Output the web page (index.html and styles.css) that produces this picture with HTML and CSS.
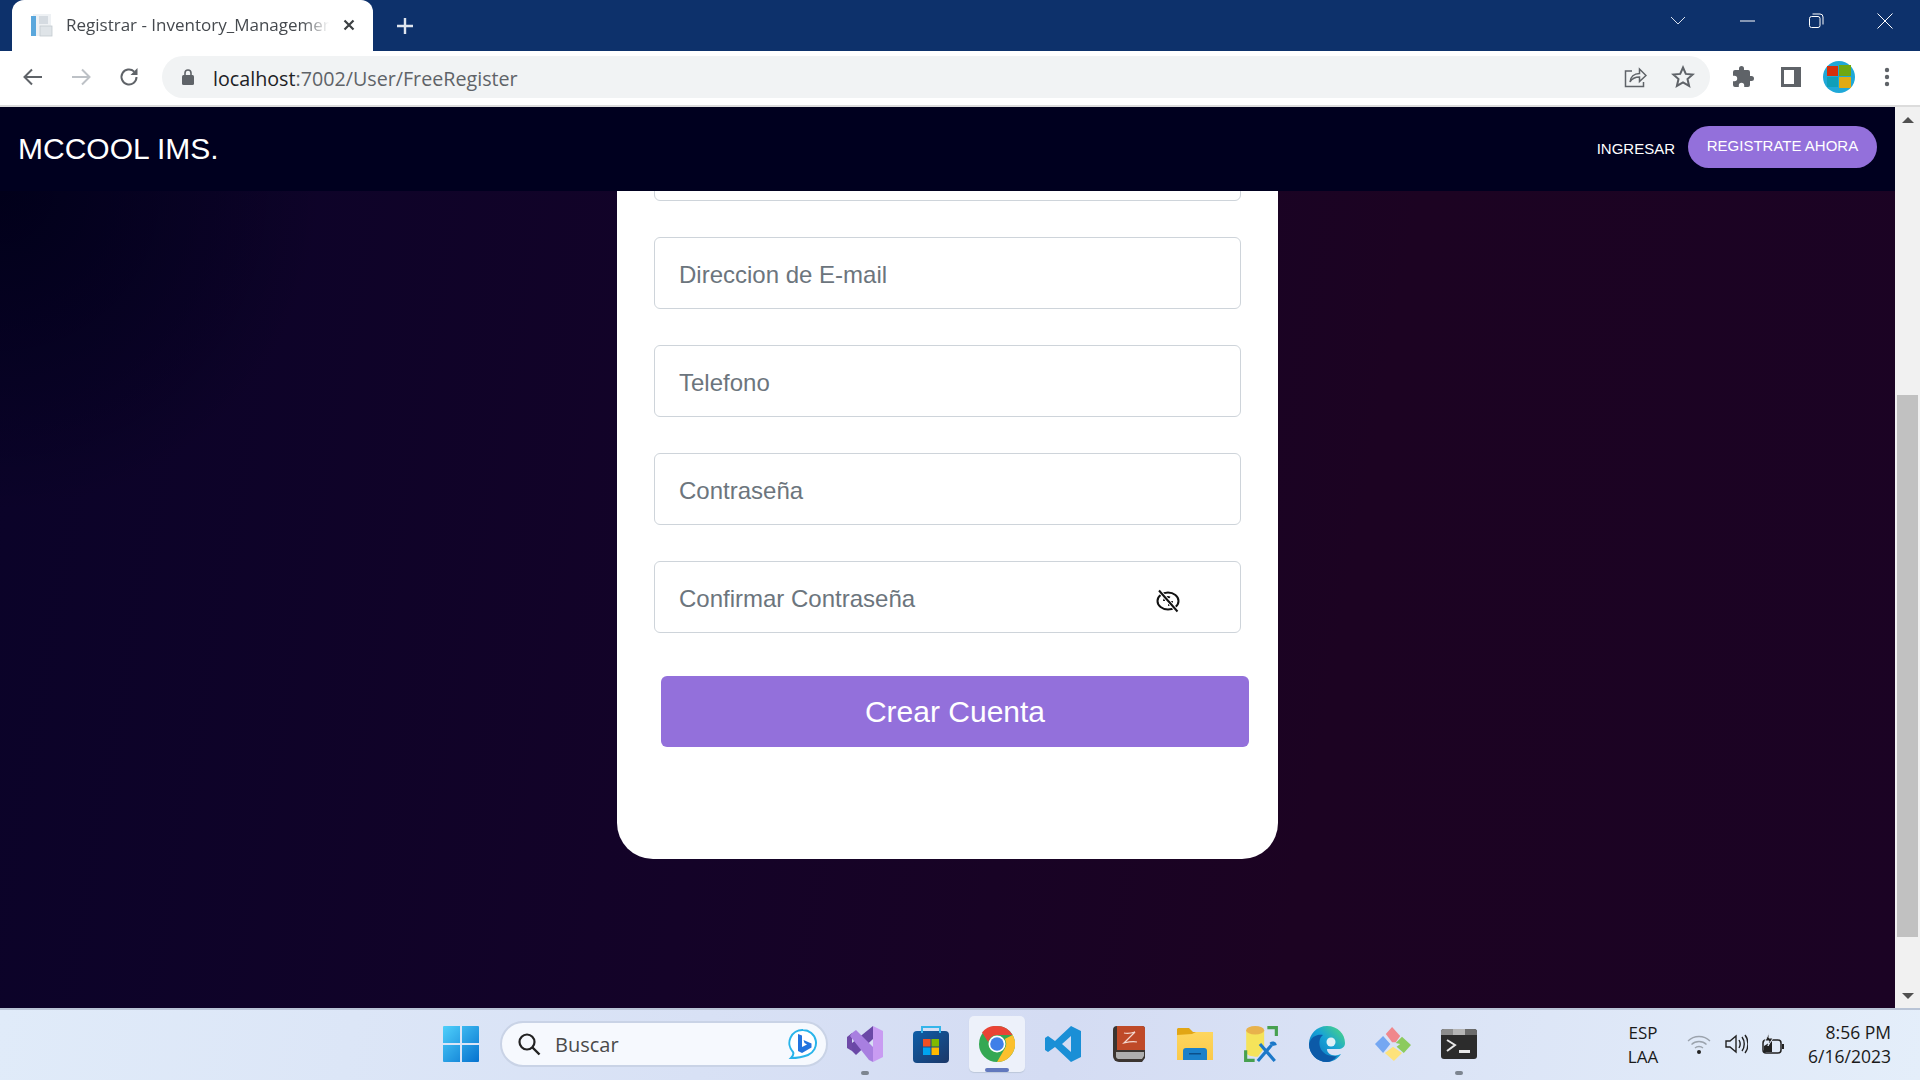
FILE: index.html
```html
<!DOCTYPE html>
<html lang="en">
<head>
    <meta charset="UTF-8">
    <title>Registrar - Inventory_Management</title>
    <link rel="stylesheet" href="styles.css">
</head>
<body>
    <div class="tabstrip">
        <div class="tab">
            <svg class="favicon" viewBox="0 0 24 24"><rect x="3" y="1" width="18" height="22" fill="#eef1f4"/><rect x="1" y="3" width="5" height="20" fill="#5aa7dc"/><rect x="9" y="3" width="9" height="8" fill="#d5dbe1"/><rect x="10" y="13" width="12" height="10" fill="#dfe4e8" stroke="#c3cad0" stroke-width=".8"/></svg>
            <span class="tab-title">Registrar - Inventory_Management</span>
            <svg class="tab-close" viewBox="0 0 16 16"><path d="M3.500 3.500l9 9M12.500 3.500l-9 9" stroke="#3c4043" stroke-width="2.200" fill="none"/></svg>
        </div>
        <svg class="new-tab" viewBox="0 0 20 20"><path d="M10 2v16M2 10h16" stroke="#dfe5ee" stroke-width="2.400" fill="none"/></svg>
        <div class="win-controls">
            <svg class="win-btn chevron" viewBox="0 0 16 10"><path d="M1 1l7 7 7-7" stroke="#d8e0ec" stroke-width="1" fill="none"/></svg>
            <svg class="win-btn" viewBox="0 0 16 16"><path d="M1 8h15" stroke="#fff" stroke-width="1" fill="none"/></svg>
            <svg class="win-btn" viewBox="0 0 16 16"><rect x="1.500" y="3.500" width="10.500" height="11" rx="2" stroke="#fff" fill="none"/><path d="M4.500 1h7.500a3 3 0 0 1 3 3v7.500" stroke="#fff" fill="none"/></svg>
            <svg class="win-btn" viewBox="0 0 16 16"><path d="M.5 .5l15 15M15.500 .5l-15 15" stroke="#fff" fill="none"/></svg>
        </div>
    </div>

    <div class="toolbar">
        <svg class="tool-icon back" viewBox="0 0 24 24"><path d="M21 12H4M11 4.500L3.500 12l7.500 7.500" stroke="#5f6368" stroke-width="2" fill="none"/></svg>
        <svg class="tool-icon" viewBox="0 0 24 24"><path d="M3 12h17M13 4.500l7.500 7.500-7.500 7.500" stroke="#bdc1c6" stroke-width="2" fill="none"/></svg>
        <svg class="tool-icon" viewBox="0 0 24 24"><path d="M19.500 12a7.500 7.500 0 1 1-2.300-5.400" stroke="#5f6368" stroke-width="2" fill="none"/><path d="M20.500 3v7h-7z" fill="#5f6368"/></svg>
        <div class="omnibox">
            <svg class="lock" viewBox="0 0 12 16"><rect x="0" y="6" width="12" height="10" rx="1.500" fill="#5f6368"/><path d="M3 7V4a3 3 0 0 1 6 0v3" stroke="#5f6368" stroke-width="1.600" fill="none"/></svg>
            <span class="url"><b>localhost</b>:7002/User/FreeRegister</span>
            <svg class="omni-icon share" viewBox="0 0 24 24"><path d="M9 6H2.500v15.500h18V17" stroke="#5f6368" stroke-width="1.500" fill="none"/><path d="M7 17c.5-5 4-8.500 9.500-8.500V4l6.500 6.500-6.500 6v-4.500c-4 0-7.500 1.500-9.500 5z" stroke="#5f6368" stroke-width="1.500" fill="none"/></svg>
            <svg class="omni-icon" viewBox="0 0 24 24"><path d="M12 2.500l2.800 6.400 6.900.6-5.200 4.600 1.600 6.800-6.100-3.600-6.100 3.600 1.600-6.800-5.200-4.600 6.900-.6z" stroke="#5f6368" stroke-width="2" fill="none"/></svg>
        </div>
        <svg class="tool-icon puzzle" viewBox="0 0 24 24"><path d="M20.500 11H19V7a2 2 0 0 0-2-2h-4V3.500a2.500 2.500 0 0 0-5 0V5H4a2 2 0 0 0-2 2v3.800h1.500a2.700 2.700 0 0 1 0 5.400H2V20a2 2 0 0 0 2 2h3.800v-1.500a2.700 2.700 0 0 1 5.400 0V22H17a2 2 0 0 0 2-2v-4h1.500a2.500 2.500 0 0 0 0-5z" fill="#5f6368"/></svg>
        <svg class="tool-icon" viewBox="0 0 24 24"><path d="M2 2h20v20H2z M5 5v14h10V5z" fill="#5f6368" fill-rule="evenodd"/></svg>
        <svg class="avatar" viewBox="0 0 32 32"><circle cx="16" cy="16" r="16" fill="#1fa8d8"/><rect x="4" y="5" width="11" height="10" fill="#d52f0c"/><rect x="16" y="4" width="12" height="11" fill="#6fa812"/><rect x="4" y="16" width="11" height="10" fill="#0f9fb8"/><rect x="16" y="16" width="12" height="11" fill="#e0aa14"/></svg>
        <svg class="tool-icon dots" viewBox="0 0 24 24"><circle cx="12" cy="5" r="2.200" fill="#5f6368"/><circle cx="12" cy="12" r="2.200" fill="#5f6368"/><circle cx="12" cy="19" r="2.200" fill="#5f6368"/></svg>
    </div>

    <div class="viewport">
        <div class="page">
            <nav class="navbar">
                <a class="brand">MCCOOL IMS.</a>
                <a class="nav-link">INGRESAR</a>
                <a class="nav-cta">REGISTRATE AHORA</a>
            </nav>
            <main class="content">
                <form class="card">
                    <input class="field" type="text" placeholder="Apellido">
                    <input class="field" type="text" placeholder="Direccion de E-mail">
                    <input class="field" type="text" placeholder="Telefono">
                    <input class="field" type="password" placeholder="Contraseña">
                    <div class="field-wrap">
                        <input class="field" type="password" placeholder="Confirmar Contraseña">
                        <svg class="eye" viewBox="0 0 24 24"><ellipse cx="12" cy="12" rx="10.500" ry="8.500" stroke="#111" stroke-width="2" fill="none"/><path d="M8 12a4 4 0 0 1 6-3.500M16 12a4 4 0 0 1-4 4" stroke="#111" stroke-width="2" fill="none"/><path d="M3 1.500l18.500 21" stroke="#fff" stroke-width="4" fill="none"/><path d="M3 1.500l18.500 21" stroke="#111" stroke-width="2" fill="none"/></svg>
                    </div>
                    <button class="submit" type="button">Crear Cuenta</button>
                </form>
            </main>
        </div>
        <div class="scrollbar">
            <span class="arrow-up"></span>
            <span class="thumb"></span>
            <span class="arrow-down"></span>
        </div>
    </div>

    <div class="taskbar">
        <div class="slot">
            <svg class="task-icon" viewBox="0 0 36 36"><defs><linearGradient id="winblue" x1="0" y1="0" x2="1" y2="1"><stop offset="0" stop-color="#4fd0fb"/><stop offset="1" stop-color="#0572cf"/></linearGradient></defs><path d="M0 1a1 1 0 0 1 1-1h16v17H0zM19 0h16a1 1 0 0 1 1 1v16H19zM0 19h17v17H1a1 1 0 0 1-1-1zM19 19h17v16a1 1 0 0 1-1 1H19z" fill="url(#winblue)"/></svg>
        </div>
        <div class="search">
            <svg class="search-icon" viewBox="0 0 24 24"><circle cx="10" cy="10" r="7.500" stroke="#222" stroke-width="2.200" fill="none"/><path d="M15.500 15.500l7 7" stroke="#222" stroke-width="2.400" fill="none"/></svg>
            <span class="search-text">Buscar</span>
            <svg class="bing" viewBox="0 0 30 32"><path d="M15 2a13 13 0 0 1 5 25c-5 2-10 3-17 3 2-2 3-4 2-6A13 13 0 0 1 15 2z" fill="#fff" stroke="#28b4ea" stroke-width="2"/><path d="M10 6l4 1.500V19l5-2.500-2.500-1.500-1-3 8 3.500v4L14 25l-4-2z" fill="#2273df"/></svg>
        </div>
        <div class="slot slot-first running">
            <svg class="task-icon" viewBox="0 0 36 36"><path d="M0 11l5-4v18l-5-3z" fill="#6f4aa8"/><path d="M26 0v13L9 29l-4-4v-8z" fill="#6a48a6"/><path d="M5 7l4-3 17 17v15l-4-2L3 10z" fill="#a87fe0"/><path d="M26 0l10 5v26l-10 5z" fill="#c99cf2"/></svg>
        </div>
        <div class="slot">
            <svg class="task-icon store" viewBox="0 0 36 38"><defs><linearGradient id="storebg" x1="0" y1="0" x2="1" y2="1"><stop offset="0" stop-color="#0f5ea8"/><stop offset="1" stop-color="#1b3768"/></linearGradient></defs><rect x="0" y="6" width="36" height="32" rx="4" fill="url(#storebg)"/><path d="M9 8V2h18v6" stroke="#35b5ea" stroke-width="2" fill="none"/><rect x="10" y="14" width="7.500" height="7.500" fill="#f25022"/><rect x="18.500" y="14" width="7.500" height="7.500" fill="#7fba00"/><rect x="10" y="22.500" width="7.500" height="7.500" fill="#00a4ef"/><rect x="18.500" y="22.500" width="7.500" height="7.500" fill="#ffb900"/></svg>
        </div>
        <div class="slot active">
            <svg class="task-icon" viewBox="0 0 36 36"><circle cx="18" cy="18" r="18" fill="#34a853"/><path d="M18 0a18 18 0 0 1 15.600 9H18a9 9 0 0 0-8.800 7L3 6.400A18 18 0 0 1 18 0z" fill="#ea4335"/><path d="M33.600 9A18 18 0 0 1 18 36l7.800-13.500A9 9 0 0 0 25.800 13z" fill="#fbc02d"/><circle cx="18" cy="18" r="8.500" fill="#fff"/><circle cx="18" cy="18" r="6.800" fill="#3f7fe8"/></svg>
        </div>
        <div class="slot">
            <svg class="task-icon" viewBox="0 0 36 36"><path d="M26 0l10 5v26l-10 5-16-15-7 5-3-2V12l3-2 7 5zM26 10l-9 8 9 8z" fill="#1a8fd6" fill-rule="evenodd"/></svg>
        </div>
        <div class="slot">
            <svg class="task-icon" viewBox="0 0 32 36"><path d="M4 0h25a3 3 0 0 1 3 3v29l-3 4H6a6 6 0 0 1-6-6V4a4 4 0 0 1 4-4z" fill="#3b3531"/><path d="M4 0h25a3 3 0 0 1 3 3v21H4z" fill="#bf4a28"/><path d="M3 26h28v4l-2 3H5a3 3 0 0 1-2-2z" fill="#aeaeae"/><path d="M11 7c4 1 8 0 11-1L11 17c4-1 9-2 13-1" stroke="#f3d8cf" stroke-width="1.200" fill="none"/></svg>
        </div>
        <div class="slot">
            <svg class="task-icon" viewBox="0 0 36 32"><defs><linearGradient id="folderbg" x1="0" y1="0" x2="0" y2="1"><stop offset="0" stop-color="#fdd65e"/><stop offset="1" stop-color="#fbc94a"/></linearGradient></defs><path d="M1 0h11l4 4h20v28H0V1z" fill="#e2a615"/><path d="M0 7l15-1 4-2h17v28H0z" fill="url(#folderbg)"/><path d="M6 32v-9a3 3 0 0 1 3-3h18a3 3 0 0 1 3 3v9z" fill="#1a80ca"/><rect x="12" y="25" width="12" height="1.500" fill="#0b4f8a"/></svg>
        </div>
        <div class="slot">
            <svg class="task-icon" viewBox="0 0 32 34"><path d="M2 4h17v17l-6 8C6 29 2 27 2 25z" fill="#f5e35a"/><ellipse cx="10.500" cy="4" rx="8.500" ry="4" fill="#e8b24c"/><path d="M22 1.500h8.500v8M1.500 23v9.500h8.500" stroke="#47a04f" stroke-width="3" fill="none"/><path d="M13 33l13-15M29 33L15 17" stroke="#1c78c8" stroke-width="3" fill="none"/><path d="M24 16a4 4 0 0 1 7 2l-4 1z" fill="#1c78c8"/></svg>
        </div>
        <div class="slot">
            <svg class="task-icon" viewBox="0 0 36 36"><defs><linearGradient id="edgebg" x1="0" y1="1" x2="1" y2="0"><stop offset="0" stop-color="#0a63b6"/><stop offset=".55" stop-color="#17a3d6"/><stop offset="1" stop-color="#52dc78"/></linearGradient></defs><path d="M18 0C29 0 36 8 36 17c0 4-3 6-7 6H18c0 6 8 8 14 5-3 5-9 8-14 8C8 36 0 28 0 18S8 0 18 0z" fill="url(#edgebg)"/><path d="M0 18C2 10 9 8 14 9c-4 3-4 8-3 12 2 7 10 10 17 9-3 4-7 6-10 6C8 36 0 28 0 18z" fill="#0c5aa8"/><circle cx="22" cy="16" r="4.500" fill="#dff0f7"/></svg>
        </div>
        <div class="slot">
            <svg class="task-icon" viewBox="0 0 40 38"><path d="M19 17l-7-9 7-8 9 10-5 7z" fill="#f0878c"/><path d="M17 19L9 10 0 19l9 10z" fill="#74a7f2"/><path d="M23 18l7-7 10 9-8 9-8-7 4-3-5-1z" fill="#8ccb5e"/><path d="M20 22l-9 7 10 9 9-9z" fill="#fde27a"/></svg>
        </div>
        <div class="slot running">
            <svg class="task-icon term" viewBox="0 0 36 30"><rect width="36" height="30" rx="3" fill="#2c2c2c"/><path d="M0 6V3a3 3 0 0 1 3-3h9v6z" fill="#8d8d8d"/><rect x="12" width="12" height="6" fill="#b5b5b5"/><path d="M24 0h9a3 3 0 0 1 3 3v3H24z" fill="#6b6b6b"/><path d="M6 11l8 5-8 6" stroke="#e8e8e8" stroke-width="2" fill="none"/><rect x="18" y="21" width="11" height="3" fill="#e8e8e8"/></svg>
        </div>
        <div class="tray">
            <div class="lang"><span>ESP</span><span>LAA</span></div>
            <svg class="tray-icon" viewBox="0 0 24 24"><path d="M1 9c6-6 16-6 22 0M4.500 12.500c4-4 11-4 15 0M8 16c2-2 6-2 8 0" stroke="#9ba3ad" stroke-width="1.300" fill="none"/><circle cx="12" cy="20" r="2" fill="#222"/></svg>
            <svg class="tray-icon" viewBox="0 0 24 24"><path d="M2 9h4l6-5v16l-6-5H2z" stroke="#222" stroke-width="1.400" fill="none"/><path d="M15 8c1.500 2.500 1.500 5.500 0 8M18 5c3 4 3 10 0 14M21 3c4 5 4 13 0 18" stroke="#222" stroke-width="1.400" fill="none"/></svg>
            <svg class="tray-icon" viewBox="0 0 24 24"><rect x="2" y="8" width="18" height="13" rx="3" stroke="#222" stroke-width="1.500" fill="none"/><rect x="21" y="12" width="2" height="5" fill="#222"/><path d="M3 20V14l8-5v11z" fill="#222"/><path d="M8 1L4 9h4l-1 5 5-8H8z" fill="#222" stroke="#e3ebf7"/></svg>
            <div class="clock"><span>8:56 PM</span><span>6/16/2023</span></div>
        </div>
    </div>
</body>
</html>
```

FILE: styles.css
```css
* {
    box-sizing: border-box;
}
html, body {
    margin: 0;
    height: 100%;
    overflow: hidden;
}
body {
    display: flex;
    flex-direction: column;
    font-family: "Liberation Sans", Arial, sans-serif;
}

/* browser chrome */
.tabstrip {
    height: 51px;
    flex: none;
    display: flex;
    align-items: flex-end;
    padding-left: 12px;
    background: #0d316b;
}
.tab {
    width: 361px;
    height: 51px;
    display: flex;
    align-items: center;
    padding: 0 16px 2px 18px;
    background: #fff;
    border-radius: 12px 12px 0 0;
}
.favicon {
    width: 24px;
    height: 24px;
    flex: none;
}
.tab-title {
    flex: 1;
    margin-left: 12px;
    font: 17px "Open Sans", sans-serif;
    color: #45494e;
    white-space: nowrap;
    overflow: hidden;
    -webkit-mask-image: linear-gradient(to right, #000 90%, transparent);
    mask-image: linear-gradient(to right, #000 90%, transparent);
}
.tab-close {
    width: 16px;
    height: 16px;
    flex: none;
    margin-left: 12px;
}
.new-tab {
    width: 20px;
    height: 20px;
    margin: 0 0 15px 22px;
}
.win-controls {
    margin-left: auto;
    align-self: flex-start;
    display: flex;
    align-items: center;
    height: 42px;
    gap: 53px;
    padding-right: 27px;
}
.win-btn {
    width: 16px;
    height: 16px;
}
.chevron {
    height: 10px;
}

.toolbar {
    height: 56px;
    flex: none;
    display: flex;
    align-items: center;
    background: #fff;
    border-bottom: 2px solid #dcdcdc;
    padding: 0 0 2px 21px;
}
.tool-icon {
    width: 24px;
    height: 24px;
    flex: none;
    margin-right: 24px;
}
.omnibox {
    width: 1548px;
    height: 42px;
    flex: none;
    margin-left: -3px;
    display: flex;
    align-items: center;
    background: #f1f3f4;
    border-radius: 21px;
    padding: 0 15px 0 20px;
}
.lock {
    width: 12px;
    height: 16px;
}
.url {
    flex: 1;
    margin: 2px 0 0 19px;
    font: 19.7px "Open Sans", sans-serif;
    color: #5f6368;
    white-space: nowrap;
}
.url b {
    font-weight: normal;
    color: #202124;
}
.omni-icon {
    width: 24px;
    height: 24px;
    margin-left: 24px;
}
.puzzle {
    margin-left: 21px;
}
.avatar {
    width: 32px;
    height: 32px;
    flex: none;
    margin: 0 20px 0 -4px;
}
.dots {
    margin-right: 0;
}

/* page */
.viewport {
    flex: 1;
    min-height: 0;
    display: flex;
}
.page {
    flex: 1;
    min-width: 0;
    display: flex;
    flex-direction: column;
    background:
        radial-gradient(circle 320px at 0 84px, #01001a, transparent),
        linear-gradient(100deg, #0a0329, #140328 40%, #1c0322 70%, #1b0324);
}
.navbar {
    height: 84px;
    flex: none;
    display: flex;
    align-items: center;
    padding: 0 18px;
    background: #00001f;
    color: #fff;
}
.brand {
    font-size: 30px;
    margin-right: auto;
}
.nav-link {
    font-size: 15px;
    margin: 0 13px 2px 0;
}
.nav-cta {
    width: 189px;
    height: 42px;
    display: flex;
    align-items: center;
    justify-content: center;
    margin-bottom: 4px;
    padding-bottom: 3px;
    font-size: 15px;
    background: #9370db;
    border-radius: 21px;
}
.content {
    flex: 1;
    min-height: 0;
    overflow: hidden;
    display: flex;
    flex-direction: column;
    justify-content: flex-end;
    align-items: center;
    padding-bottom: 149px;
}
.card {
    width: 661px;
    flex: none;
    display: flex;
    flex-direction: column;
    gap: 36px;
    padding: 0 37px 112px;
    background: #fff;
    border-radius: 0 0 36px 36px;
}
.field {
    width: 100%;
    height: 72px;
    display: block;
    padding: 4px 24px 0;
    font: 24px "Liberation Sans", Arial, sans-serif;
    color: #212529;
    background: #fff;
    border: 1px solid #ced4da;
    border-radius: 6px;
    outline: none;
}
.field::placeholder {
    color: #6c757d;
    opacity: 1;
}
.field-wrap {
    position: relative;
}
.eye {
    position: absolute;
    right: 61px;
    top: 28px;
    width: 24px;
    height: 24px;
}
.submit {
    width: 588px;
    height: 71px;
    margin: 7px 0 0 7px;
    font: 30px "Liberation Sans", Arial, sans-serif;
    color: #fff;
    background: #9370db;
    border: none;
    border-radius: 6px;
}

/* scrollbar */
.scrollbar {
    width: 25px;
    flex: none;
    display: flex;
    flex-direction: column;
    align-items: center;
    background: #f1f1f1;
    padding-top: 10px;
}
.arrow-up, .arrow-down {
    width: 0;
    height: 0;
    border-left: 6px solid transparent;
    border-right: 6px solid transparent;
}
.arrow-up {
    border-bottom: 6px solid #505050;
}
.arrow-down {
    border-top: 6px solid #505050;
    margin-top: 56px;
}
.thumb {
    width: 21px;
    height: 542px;
    margin-top: 272px;
    background: #c1c1c1;
}

/* windows taskbar */
.taskbar {
    height: 72px;
    flex: none;
    display: flex;
    align-items: center;
    padding: 0 0 2px 428px;
    border-top: 2px solid #b9c4d6;
    background: linear-gradient(100deg, #e0ebf9, #d4dcf3 55%, #e4eefa);
}
.slot {
    position: relative;
    width: 66px;
    height: 56px;
    flex: none;
    display: flex;
    align-items: center;
    justify-content: center;
}
.slot-first {
    margin-left: 4px;
}
.task-icon {
    width: 36px;
    height: 36px;
}
.store {
    height: 38px;
}
.term {
    height: 30px;
}
.running::after, .active::after {
    content: "";
    position: absolute;
    bottom: -3px;
    left: 50%;
    width: 8px;
    height: 4px;
    margin-left: -4px;
    border-radius: 2px;
    background: #7d8590;
}
.active::before {
    content: "";
    position: absolute;
    left: 5px;
    right: 5px;
    top: 0;
    bottom: 0;
    background: #edf1fa;
    border-radius: 5px;
    box-shadow: 0 1px 1px #bcc7da;
}
.active .task-icon {
    position: relative;
}
.active::after {
    width: 24px;
    margin-left: -12px;
    bottom: 0;
    background: #6178bd;
}
.search {
    width: 328px;
    height: 46px;
    flex: none;
    margin-left: 6px;
    display: flex;
    align-items: center;
    padding: 0 8px 0 15px;
    background: #f6f9fe;
    border: 2px solid #c9d3e6;
    border-radius: 23px;
}
.search-icon {
    width: 24px;
    height: 24px;
}
.search-text {
    flex: 1;
    margin-left: 14px;
    font: 20px "Open Sans", sans-serif;
    color: #4a4a4a;
}
.bing {
    width: 30px;
    height: 32px;
}
.tray {
    margin-left: auto;
    display: flex;
    align-items: center;
    padding-right: 29px;
    color: #1a1a1a;
    font: 17px "Open Sans", sans-serif;
}
.lang {
    width: 60px;
    margin-right: 14px;
    display: flex;
    flex-direction: column;
    align-items: center;
    gap: 1px;
    line-height: 23px;
}
.tray-icon {
    width: 24px;
    height: 24px;
    margin-right: 13px;
}
.clock {
    width: 90px;
    margin-left: 3px;
    display: flex;
    flex-direction: column;
    align-items: flex-end;
    gap: 1px;
    line-height: 23px;
    font-size: 17.5px;
}
```
